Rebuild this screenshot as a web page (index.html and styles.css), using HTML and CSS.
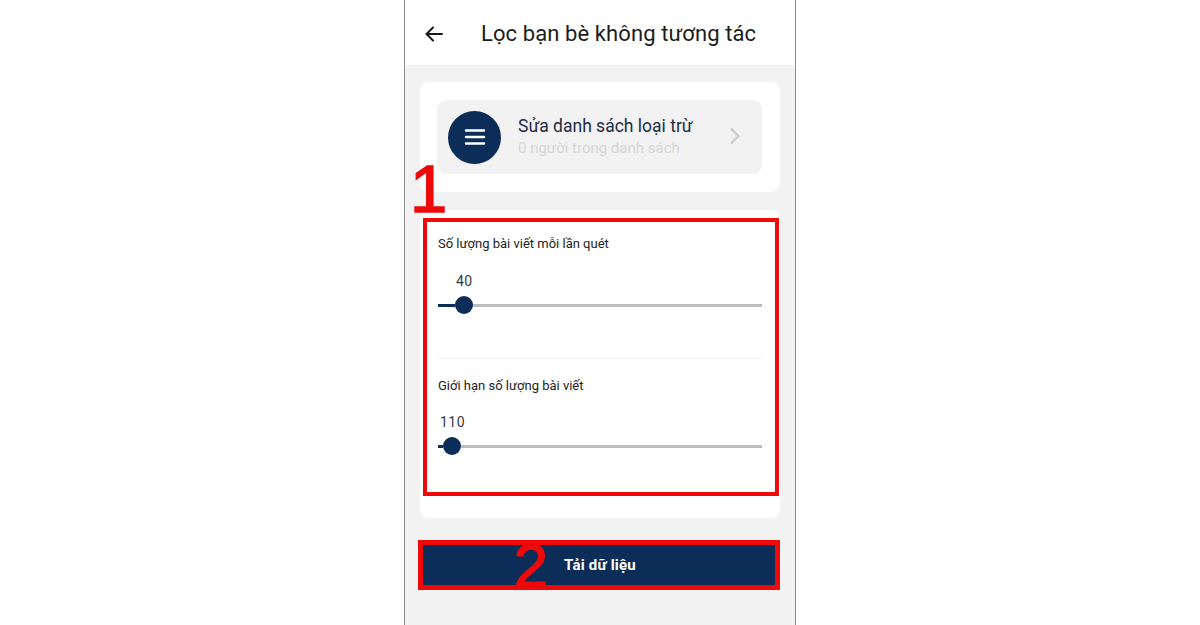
FILE: index.html
```html
<!DOCTYPE html>
<html lang="vi">
<head>
<meta charset="utf-8">
<title>Lọc bạn bè không tương tác</title>
<link rel="stylesheet" href="styles.css">
</head>
<body>
<div class="stage">
  <div class="phone">
    <header class="header">
      <svg class="back" width="24" height="24" viewBox="0 0 24 24"><path d="M20 12H5M11 5.5L4.5 12L11 18.5" fill="none" stroke="#1a1a1a" stroke-width="2" stroke-linecap="round" stroke-linejoin="round"/></svg>
      <h1 class="title">Lọc bạn bè không tương tác</h1>
    </header>
    <main class="content">
      <section class="card card-top">
        <div class="item">
          <div class="avatar">
            <svg width="22" height="18" viewBox="0 0 22 18"><path d="M2 2.5H20M2 9H20M2 15.5H20" stroke="#fff" stroke-width="2.4" stroke-linecap="round"/></svg>
          </div>
          <div class="item-text">
            <div class="item-title">Sửa danh sách loại trừ</div>
            <div class="item-sub">0 người trong danh sách</div>
          </div>
          <svg class="chev" width="14" height="18" viewBox="0 0 14 18"><path d="M3.5 2L10.5 9L3.5 16" fill="none" stroke="#cbcbcb" stroke-width="2.2" stroke-linecap="round" stroke-linejoin="round"/></svg>
        </div>
      </section>
      <section class="card card-settings">
        <div class="setting">
          <div class="label">Số lượng bài viết mỗi lần quét</div>
          <div class="value" style="padding-left:18px">40</div>
          <div class="slider">
            <div class="fill" style="width:17px"></div>
            <div class="thumb"></div>
            <div class="rest"></div>
          </div>
        </div>
        <div class="divider"></div>
        <div class="setting setting-2">
          <div class="label">Giới hạn số lượng bài viết</div>
          <div class="value" style="padding-left:2px">110</div>
          <div class="slider">
            <div class="fill" style="width:5px"></div>
            <div class="thumb"></div>
            <div class="rest"></div>
          </div>
        </div>
      </section>
      <button class="load">Tải dữ liệu</button>
    </main>
    <div class="mark mark-box-1"></div>
    <div class="mark mark-box-2"></div>
    <div class="mark num num-1">1</div>
    <div class="mark num num-2">2</div>
  </div>
</div>
</body>
</html>
```
FILE: styles.css
```css
* { box-sizing: border-box; }
html, body {
  margin: 0;
  padding: 0;
  background: #ffffff;
  width: 1200px;
  height: 625px;
  overflow: hidden;
  font-family: Roboto, "Noto Sans", sans-serif;
}
.stage {
  display: flex;
  justify-content: center;
  height: 625px;
}
.phone {
  position: relative;
  width: 392px;
  height: 625px;
  border-left: 1.5px solid #8c8c8c;
  border-right: 1.5px solid #8c8c8c;
  background: #f2f2f2;
  display: flex;
  flex-direction: column;
}
.header {
  height: 65px;
  background: #ffffff;
  display: flex;
  align-items: center;
  padding-left: 17px;
  flex-shrink: 0;
}
.back { display: block; margin-top: 2px; }
.title {
  margin: 2px 0 0 35px;
  font-size: 22px;
  font-weight: 400;
  color: #1c1c1c;
  letter-spacing: 0.1px;
}
.content {
  padding: 17px 15px 0 15px;
  display: flex;
  flex-direction: column;
}
.card {
  background: #ffffff;
  border-radius: 9px;
}
.card-top {
  padding: 18px 18px 18px 17px;
}
.item {
  height: 74px;
  background: #f2f2f2;
  border-radius: 9px;
  display: flex;
  align-items: center;
  padding: 0 20px 0 11px;
}
.avatar {
  width: 53px;
  height: 53px;
  border-radius: 50%;
  background: #0c2d57;
  display: flex;
  align-items: center;
  justify-content: center;
  flex-shrink: 0;
}
.item-text {
  flex: 1;
  margin-left: 17px;
  margin-top: -2px;
}
.item-title {
  font-size: 17.5px;
  color: #1d2c44;
  line-height: 22px;
}
.item-sub {
  font-size: 15px;
  color: #d6d6d6;
  line-height: 20px;
  margin-top: 1px;
}
.chev { display: block; margin-top: -2px; }
.card-settings {
  margin-top: 18px;
  padding: 25px 18px 63px 18px;
}
.label {
  font-size: 13px;
  line-height: 18px;
  color: #222222;
}
.value {
  margin-top: 19px;
  font-size: 14px;
  line-height: 18px;
  color: #333a44;
  letter-spacing: 0.5px;
}
.slider {
  margin-top: 6px;
  height: 18px;
  display: flex;
  align-items: center;
}
.fill {
  height: 3px;
  background: #0c2d57;
  flex-shrink: 0;
}
.thumb {
  width: 18px;
  height: 18px;
  border-radius: 50%;
  background: #0c2d57;
  flex-shrink: 0;
}
.rest {
  flex: 1;
  height: 3px;
  background: #bdbdbd;
}
.setting { padding-bottom: 44px; }
.setting-2 { padding-bottom: 0; padding-top: 18px; }
.setting-2 .value { margin-top: 18px; }
.divider {
  height: 1px;
  background: #f1f1f1;
}
.load {
  margin-top: 25px;
  height: 44px;
  width: 100%;
  border: 0;
  border-radius: 0;
  background: #0c2d57;
  color: #ffffff;
  font-family: Roboto, "Noto Sans", sans-serif;
  font-size: 15px;
  font-weight: 700;
  letter-spacing: 0.2px;
  padding: 0;
}
.mark { position: absolute; }
.mark-box-1 {
  left: 18px;
  top: 218px;
  width: 356px;
  height: 278px;
  border: 4px solid #ee0a0a;
}
.mark-box-2 {
  left: 13px;
  top: 540px;
  width: 362px;
  height: 50px;
  border: 5px solid #ee0a0a;
}
.num {
  font-family: "Liberation Sans", Arial, sans-serif;
  font-weight: 400;
  color: #ee0a0a;
  -webkit-text-stroke: 1.6px #ee0a0a;
  line-height: 1;
}
.num-1 {
  left: 5px;
  top: 155px;
  font-size: 67px;
}
.num-2 {
  left: 109px;
  top: 536px;
  font-size: 61px;
}
```
